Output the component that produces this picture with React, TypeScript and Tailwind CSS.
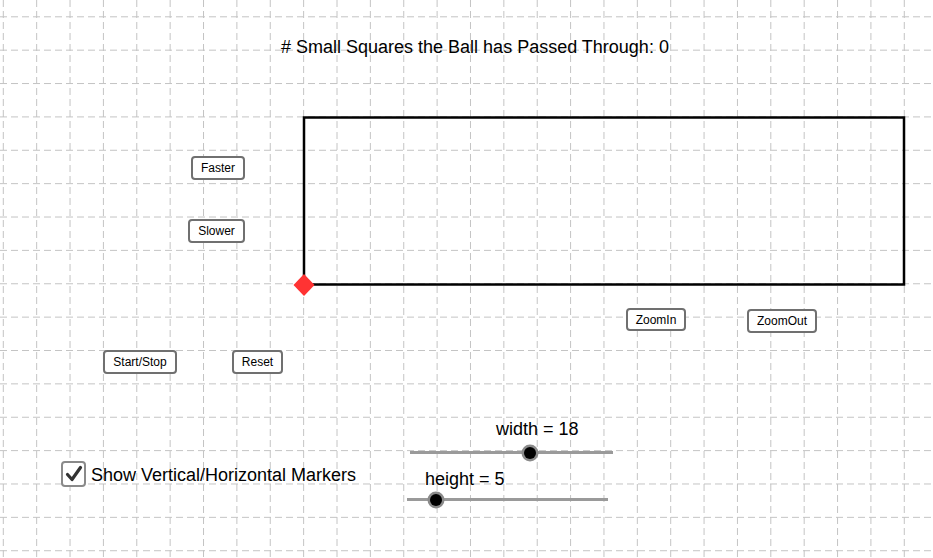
import React from 'react';

const STEP = 33.37;
const X0 = 3.3;
const Y0 = 16.8;

// GeoGebra-style canvas: dashed grid, rectangle path, ball marker
function Grid() {
  const xs: number[] = [];
  const ys: number[] = [];
  for (let x = X0; x < 933; x += STEP) xs.push(x);
  for (let y = Y0; y < 558; y += STEP) ys.push(y);
  return (
    <svg className="absolute inset-0" width={933} height={558}>
      {xs.map((x) => (
        <line key={'v' + x} x1={x} y1={0} x2={x} y2={558} stroke="#c4c4c4" strokeWidth={1} strokeDasharray="7 4" />
      ))}
      {ys.map((y) => (
        <line key={'h' + y} x1={0} y1={y} x2={933} y2={y} stroke="#c4c4c4" strokeWidth={1} strokeDasharray="7 4" />
      ))}
      <rect x={304} y={117.5} width={600} height={167} fill="none" stroke="#000" strokeWidth={2.5} />
      <polygon points="304,274 314.5,285 304,296 293.5,285" fill="#ff3333" />
    </svg>
  );
}

function Btn({ label, className }: { label: string; className: string }) {
  return (
    <button
      className={`absolute flex items-center justify-center bg-white border-2 border-[#707070] rounded-[4px] text-[12px] text-black ${className}`}
    >
      {label}
    </button>
  );
}

function Slider({ label, labelClass, lineClass, thumbX, y }: { label: string; labelClass: string; lineClass: string; thumbX: number; y: number }) {
  return (
    <>
      <div className={`absolute text-[18px] leading-none text-black ${labelClass}`}>{label}</div>
      <div className={`absolute h-[3px] bg-[#9a9a9a] ${lineClass}`} />
      <svg className="absolute" style={{ left: thumbX - 10, top: y - 10 }} width={20} height={20}>
        <circle cx={10} cy={10} r={8.5} fill="#8a8a8a" />
        <circle cx={10} cy={10} r={6} fill="#000" />
      </svg>
    </>
  );
}

export default function App() {
  return (
    <div className="relative w-[933px] h-[558px] bg-white overflow-hidden font-['Liberation_Sans',Arial,sans-serif]">
      <Grid />

      <div className="absolute left-[281px] top-[38px] text-[18px] leading-none text-black whitespace-nowrap">
        # Small Squares the Ball has Passed Through: 0
      </div>

      <Btn label="Faster" className="left-[191px] top-[156px] w-[54px] h-[24px]" />
      <Btn label="Slower" className="left-[188px] top-[219px] w-[57px] h-[24px]" />
      <Btn label="Start/Stop" className="left-[103px] top-[350px] w-[74px] h-[24px]" />
      <Btn label="Reset" className="left-[232px] top-[350px] w-[51px] h-[24px]" />
      <Btn label="ZoomIn" className="left-[626px] top-[308px] w-[60px] h-[23px]" />
      <Btn label="ZoomOut" className="left-[747px] top-[309px] w-[70px] h-[24px]" />

      <div className="absolute left-[61px] top-[461px] flex items-center gap-[5px]">
        <div className="w-[25px] h-[26px] rounded-[4px] border-2 border-[#8a8a8a] bg-white flex items-center justify-center">
          <svg width={20} height={20} viewBox="0 0 20 20">
            <path d="M3.5 10.5 L8 15.5 L16.5 3.5" fill="none" stroke="#333" strokeWidth={3.2} strokeLinecap="round" strokeLinejoin="round" />
          </svg>
        </div>
        <span className="text-[18px] leading-none text-black whitespace-nowrap pt-[2px]">Show Vertical/Horizontal Markers</span>
      </div>

      <Slider label="width = 18" labelClass="left-[496px] top-[420px]" lineClass="left-[410px] top-[451px] w-[203px]" thumbX={530} y={452.5} />
      <Slider label="height = 5" labelClass="left-[425px] top-[470px]" lineClass="left-[407px] top-[498px] w-[201px]" thumbX={436} y={499.5} />
    </div>
  );
}
